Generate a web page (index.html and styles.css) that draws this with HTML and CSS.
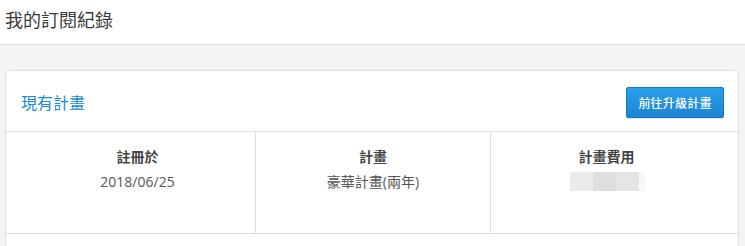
FILE: index.html
```html
<!DOCTYPE html>
<html lang="zh-Hant">
<head>
<meta charset="utf-8">
<link rel="stylesheet" href="styles.css">
</head>
<body>
<header class="topbar"><h1 class="page-title">我的訂閱紀錄</h1></header>
<main class="content">
  <section class="card">
    <div class="card-head">
      <h2 class="card-title">現有計畫</h2>
      <button class="btn-upgrade">前往升級計畫</button>
    </div>
    <div class="info-row">
      <div class="cell cell-first">
        <div class="label">註冊於</div>
        <div class="value">2018/06/25</div>
      </div>
      <div class="cell">
        <div class="label">計畫</div>
        <div class="value">豪華計畫(兩年)</div>
      </div>
      <div class="cell cell-last">
        <div class="label">計畫費用</div>
        <div class="blur">
          <span class="px px1"></span><span class="px px2"></span><span class="px px3"></span><span class="px px4"></span>
        </div>
      </div>
    </div>
    <div class="card-foot"></div>
  </section>
</main>
</body>
</html>
```
FILE: styles.css
```css
* { box-sizing: border-box; }
html, body { margin: 0; padding: 0; }
body {
  font-family: "Open Sans", "Noto Sans CJK TC", sans-serif;
  background: #f4f4f4;
  color: #444;
  height: 246px;
  overflow: hidden;
}
.topbar {
  height: 45px;
  background: #fff;
  border-bottom: 1px solid #dedede;
  display: flex;
  align-items: center;
  padding-left: 5px;
}
.page-title {
  margin: 0;
  font-size: 18px;
  font-weight: 400;
  color: #3a3a3a;
  line-height: 24px;
  margin-top: -4px;
}
.content {
  padding: 25px 6px 0 5px;
}
.card {
  background: #fff;
  border: 1px solid #dedede;
  border-radius: 5px;
}
.card-head {
  height: 61px;
  display: flex;
  align-items: center;
  justify-content: space-between;
  padding: 0 14px 0 15px;
  border-bottom: 1px solid #dedede;
}
.card-title {
  margin: 0;
  font-size: 16px;
  font-weight: 400;
  color: #1a8ad6;
  line-height: 22px;
  margin-top: 3px;
}
.btn-upgrade {
  height: 31px;
  width: 98px;
  padding: 0;
  border: 1px solid #1677c0;
  border-radius: 2px;
  background: linear-gradient(#2aa0ec, #1b84d2);
  color: #fff;
  font-family: "Noto Sans CJK TC", sans-serif;
  font-size: 12px;
  font-weight: 500;
  letter-spacing: 0.2px;
  box-shadow: 0 1px 1px rgba(0,0,0,0.12);
  margin-top: 2px;
}
.info-row {
  display: grid;
  grid-template-columns: 249px 235px 1fr;
  border-bottom: 1px solid #dedede;
}
.cell {
  height: 101px;
  display: flex;
  flex-direction: column;
  align-items: center;
  padding-top: 15px;
}
.cell-first { padding-left: 14px; }
.cell-last { padding-right: 16px; }
.cell + .cell { border-left: 1px solid #dedede; }
.label {
  font-size: 14px;
  font-weight: 700;
  color: #444;
  line-height: 20px;
}
.value {
  font-size: 14px;
  color: #555;
  line-height: 20px;
  margin-top: 5px;
}
.blur {
  display: flex;
  margin-top: 5px;
  height: 19px;
  margin-left: 2px;
}
.px { display: block; height: 19px; }
.px1 { width: 23px; background: #ebebeb; }
.px2 { width: 23px; background: #dedede; }
.px3 { width: 23px; background: #e5e5e5; }
.px4 { width: 6px; background: #f7f7f7; }
.card-foot { height: 20px; }
```
